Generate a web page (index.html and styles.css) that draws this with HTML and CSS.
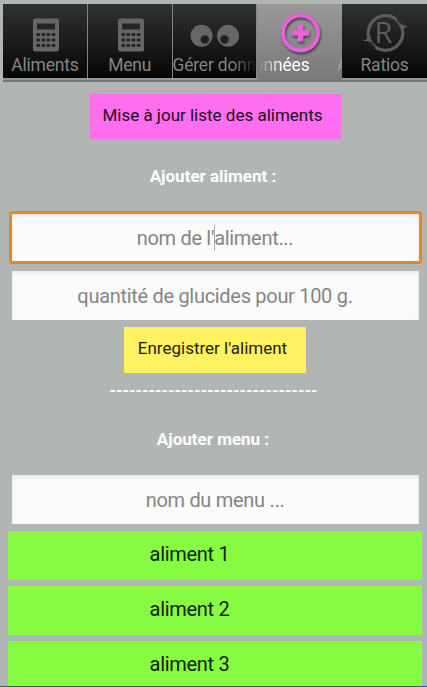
FILE: index.html
```html
<!DOCTYPE html>
<html lang="fr">
<head>
    <meta charset="UTF-8">
    <meta name="viewport" content="width=device-width, initial-scale=1.0">
    <title>Gérer données</title>
    <link rel="stylesheet" href="styles.css">
</head>
<body>
    <nav class="tabs">
        <a class="tab">
            <svg class="icon" width="40" height="40" viewBox="0 0 40 40">
                <rect x="8" y="4.500" width="26" height="33" rx="2.5" fill="#666"/>
                <rect x="12" y="9.500" width="18" height="6" fill="#252525"/>
                <path d="M11.500 20.500h19M11.500 26h19M11.500 31.500h19" stroke="#252525" stroke-width="3" stroke-dasharray="3.500 1.600"/>
            </svg>
            <span class="label">Aliments</span>
        </a>
        <a class="tab">
            <svg class="icon" width="40" height="40" viewBox="0 0 40 40">
                <rect x="8" y="4.500" width="26" height="33" rx="2.5" fill="#666"/>
                <rect x="12" y="9.500" width="18" height="6" fill="#252525"/>
                <path d="M11.500 20.500h19M11.500 26h19M11.500 31.500h19" stroke="#252525" stroke-width="3" stroke-dasharray="3.500 1.600"/>
            </svg>
            <span class="label">Menu</span>
        </a>
        <a class="tab">
            <svg class="icon" width="54" height="40" viewBox="0 0 54 40">
                <circle cx="14.500" cy="21.8" r="11" fill="#666"/>
                <circle cx="17.8" cy="25.5" r="4.3" fill="#202020"/>
                <circle cx="41" cy="21.8" r="11" fill="#666"/>
                <circle cx="37.500" cy="25.5" r="4.3" fill="#202020"/>
            </svg>
            <span class="label fade-right">Gérer données</span>
        </a>
        <a class="tab selected">
            <svg class="icon" width="44" height="40" viewBox="0 0 44 40">
                <g class="plus" fill="none" stroke="#ea5fdc">
                    <circle cx="22.5" cy="19" r="17.5" stroke-width="4"/>
                    <path d="M22.5 10.500v17M14 19h17" stroke-width="5.5"/>
                </g>
            </svg>
            <span class="label fade-left">onnées</span>
            <span class="label next">A</span>
        </a>
        <a class="tab">
            <svg class="icon" width="48" height="40" viewBox="0 0 48 40">
                <circle cx="24.5" cy="19" r="17.3" fill="none" stroke="#5c5c5c" stroke-width="3.2"/>
                <path d="M2 27l7-4 3 9-4-5zM47 12l-7 4-3-9 4 4z" fill="#5c5c5c"/>
                <path d="M9 28l5 6M40 10l-4-5" stroke="#191919" stroke-width="1.200"/>
                <text class="logo" x="13.5" y="29">R</text>
            </svg>
            <span class="label">Ratios</span>
        </a>
    </nav>

    <main class="content">
        <button class="btn btn-update">Mise à jour liste des aliments</button>
        <h2 class="title title-food">Ajouter aliment :</h2>
        <div class="field focused"><span>nom de l'<i class="caret"></i>aliment...</span></div>
        <div class="field"><span>quantité de glucides pour 100 g.</span></div>
        <button class="btn btn-save">Enregistrer l'aliment</button>
        <div class="separator">--------------------------------</div>
        <h2 class="title title-menu">Ajouter menu :</h2>
        <div class="field"><span>nom du menu ...</span></div>
        <ul class="foods">
            <li>aliment 1</li>
            <li>aliment 2</li>
            <li>aliment 3</li>
        </ul>
    </main>
</body>
</html>
```

FILE: styles.css
```css
* {
    box-sizing: border-box;
}

body {
    margin: 0;
    height: 687px;
    overflow: hidden;
    background-color: #b1b6b4;
    font-family: Roboto, sans-serif;
    border-bottom: 1px solid #555;
}

.tabs {
    display: flex;
    height: 78px;
    margin: 4px 0 0 3px;
    background-color: #989a99;
    border-bottom: 2px solid #747675;
}

.tab {
    position: relative;
    display: flex;
    flex-direction: column;
    align-items: center;
    width: 85px;
    height: 74px;
    padding-top: 10px;
    overflow: hidden;
    background: linear-gradient(#303131, #1c1c1c 50%, #060606);
    border-right: 1px solid #858585;
    color: #858585;
}

.tab:last-child {
    border-right: 0;
}

.tab.selected {
    height: 76px;
    background: linear-gradient(#999, #797979);
    border-right: 0;
    color: #fff;
}

.icon {
    flex: none;
    overflow: visible;
}

.label {
    height: 22px;
    font-size: 17.5px;
    letter-spacing: -0.2px;
    line-height: 22px;
    white-space: nowrap;
}

.fade-right {
    width: 84px;
    overflow: hidden;
    -webkit-mask-image: linear-gradient(to right, #000 70%, transparent);
    mask-image: linear-gradient(to right, #000 70%, transparent);
}

.fade-left {
    width: 84px;
    text-indent: -4px;
    -webkit-mask-image: linear-gradient(to right, transparent, #000 28%);
    mask-image: linear-gradient(to right, transparent, #000 28%);
}

.next {
    position: absolute;
    right: -6px;
    top: 50px;
    opacity: 0.25;
}

.plus {
    filter: drop-shadow(1px 2px 1px #444);
}

.logo {
    fill: #5c5c5c;
    font-family: "Open Sans", sans-serif;
    font-size: 29px;
}

.content {
    display: flex;
    flex-direction: column;
    align-items: center;
    padding: 12px 5px 0 8px;
}

.btn {
    border: 0;
    padding: 0 5px 4px 0;
    color: #210d20;
    font-family: inherit;
    font-size: 17px;
    white-space: nowrap;
}

.btn-update {
    width: 251px;
    height: 45px;
    background-color: #ff6eef;
}

.title {
    margin: 0;
    padding-right: 4px;
    color: #fff;
    font-size: 17px;
    line-height: 20px;
}

.title-food {
    margin-top: 27px;
}

.field {
    display: flex;
    align-items: center;
    justify-content: center;
    width: 407px;
    height: 49px;
    background-color: #fbfbfb;
    box-shadow: inset 0 2px 4px #e7e7e7;
    color: #858585;
    font-size: 20px;
    letter-spacing: -0.3px;
}

.focused {
    width: 413px;
    height: 53px;
    margin: 25px 0 7px;
    border: 3px solid #e4862c;
    border-radius: 3px;
}

.caret {
    display: inline-block;
    width: 1px;
    height: 26px;
    margin-right: -1px;
    vertical-align: -6px;
    background-color: #aaa;
}

.btn-save {
    width: 182px;
    height: 46px;
    margin-top: 7px;
    background-color: #fff15f;
    color: #211f0d;
}

.separator {
    height: 20px;
    margin-top: 8px;
    padding-right: 3px;
    color: #fff;
    font-size: 16.5px;
    font-weight: bold;
    line-height: 20px;
}

.title-menu {
    margin: 28px 0 26px;
}

.foods {
    align-self: stretch;
    display: flex;
    flex-direction: column;
    gap: 6px;
    margin: 7px 0 0;
    padding: 0;
    list-style: none;
}

.foods li {
    height: 49px;
    padding-right: 51px;
    background-color: #86fb42;
    color: #10230a;
    font-size: 20px;
    letter-spacing: -0.3px;
    line-height: 46px;
    text-align: center;
}
```
